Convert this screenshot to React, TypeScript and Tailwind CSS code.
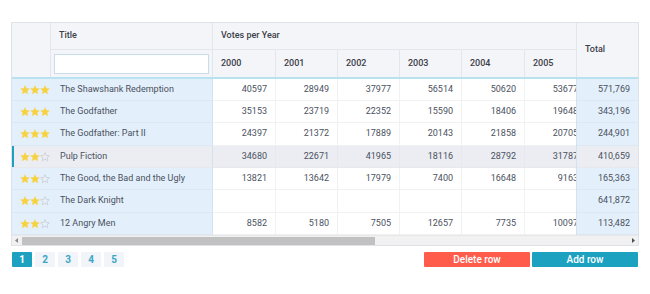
import React from "react";

type Row = { title: string; stars: number; v: (number | null)[]; total: string; hover?: boolean };

const rows: Row[] = [
  { title: "The Shawshank Redemption", stars: 3, v: [40597, 28949, 37977, 56514, 50620, 53677], total: "571,769" },
  { title: "The Godfather", stars: 3, v: [35153, 23719, 22352, 15590, 18406, 19648], total: "343,196" },
  { title: "The Godfather: Part II", stars: 3, v: [24397, 21372, 17889, 20143, 21858, 20705], total: "244,901" },
  { title: "Pulp Fiction", stars: 2, v: [34680, 22671, 41965, 18116, 28792, 31787], total: "410,659", hover: true },
  { title: "The Good, the Bad and the Ugly", stars: 2, v: [13821, 13642, 17979, 7400, 16648, 9163], total: "165,363" },
  { title: "The Dark Knight", stars: 2, v: [null, null, null, null, null, null], total: "641,872" },
  { title: "12 Angry Men", stars: 2, v: [8582, 5180, 7505, 12657, 7735, 10097], total: "113,482" },
];

const years = ["2000", "2001", "2002", "2003", "2004", "2005"];
const yw = ["w-[63px]", "w-[62px]", "w-[62px]", "w-[62px]", "w-[63px]", "w-[62px]"];
const rh = ["h-[22px]", "h-[22px]", "h-[23px]", "h-[22px]", "h-[22px]", "h-[23px]", "h-[22px]"];

function Star({ filled }: { filled: boolean }) {
  return (
    <svg width="10" height="10" viewBox="0 0 24 24" className="shrink-0">
      <path
        d="M12 1.5l3.1 6.6 7.2.8-5.4 4.9 1.6 7.1L12 17.3l-6.5 3.6 1.6-7.1-5.4-4.9 7.2-.8z"
        fill={filled ? "#f7d23e" : "none"}
        stroke={filled ? "#f7d23e" : "#c4c7cc"}
        strokeWidth={filled ? 1 : 1.6}
        strokeLinejoin="round"
      />
    </svg>
  );
}

export default function App() {
  return (
    <div className="w-[650px] h-[294px] bg-white text-[9px] text-[#4a5160]" style={{ fontFamily: "Roboto, 'Liberation Sans', sans-serif" }}>
      <div className="pt-[22px] pl-[11px]">
        <div className="w-[628px] border border-[#dfe2e6]">
          {/* Header */}
          <div className="flex bg-[#f4f5f9] border-b-2 border-[#b8e2f0] text-[#3c4048] font-medium">
            <div className="w-[39px] h-[54px] border-r border-[#e3e6ea] shrink-0" />
            <div className="w-[162px] shrink-0 border-r border-[#e3e6ea] flex flex-col">
              <div className="h-[27px] border-b border-[#e3e6ea] flex items-center pl-[8px]">Title</div>
              <div className="h-[27px] flex items-center px-[3px]">
                <div className="w-[157px] h-[20px] bg-white border border-[#c9dcec]" />
              </div>
            </div>
            <div className="w-[364px] shrink-0 overflow-hidden border-r border-[#e3e6ea] flex flex-col">
              <div className="h-[27px] border-b border-[#e3e6ea] flex items-center pl-[8px]">Votes per Year</div>
              <div className="h-[27px] flex w-[600px]">
                {years.map((y, i) => (
                  <div key={y} className={`${yw[i]} shrink-0 border-r border-[#e3e6ea] flex items-center pl-[8px]`}>{y}</div>
                ))}
                <div className="w-[62px] shrink-0 flex items-center pl-[8px]">2006</div>
              </div>
            </div>
            <div className="flex-1 h-[54px] flex items-center pl-[8px]">Total</div>
          </div>
          {/* Body */}
          {rows.map((r, ri) => (
            <div key={r.title} className={`flex ${rh[ri]} ${r.hover ? "bg-[#ebedf2]" : ""}`}>
              <div className={`w-[39px] shrink-0 flex items-center pl-[8px] border-b ${r.hover ? "shadow-[inset_2px_0_0_#1ca1c1] border-b-[#e6e8ec]" : "bg-[#e3effa] border-b-[#dbe7f3]"}`}>
                {[0, 1, 2].map((k) => (
                  <Star key={k} filled={k < r.stars} />
                ))}
              </div>
              <div className={`w-[162px] shrink-0 flex items-center pl-[9px] border-r border-r-[#d4e2f0] border-b ${r.hover ? "border-b-[#e6e8ec]" : "bg-[#e3effa] border-b-[#dbe7f3]"} whitespace-nowrap`}>
                {r.title}
              </div>
              <div className="w-[364px] shrink-0 overflow-hidden border-r border-[#d4e2f0]">
                <div className="flex w-[600px] h-full">
                  {r.v.map((n, i) => (
                    <div key={i} className={`${yw[i]} shrink-0 border-r border-b ${r.hover ? "border-[#e6e8ec]" : "border-[#f0f1f3] bg-white"} flex items-center justify-end pr-[8px]`}>
                      {n === null ? "" : n}
                    </div>
                  ))}
                </div>
              </div>
              <div className={`flex-1 flex items-center justify-end pr-[8px] border-b ${r.hover ? "border-[#e6e8ec]" : "bg-[#e3effa] border-[#dbe7f3]"}`}>
                {r.total}
              </div>
            </div>
          ))}
          {/* Scrollbar */}
          <div className="h-[10px] bg-[#f1f1f1] flex items-center border-t border-[#e8e8e8]">
            <div className="w-[10px] h-full flex items-center justify-center">
              <svg width="4" height="5" viewBox="0 0 4 5"><path d="M3 0v5L0 2.5z" fill="#8a8a8a" /></svg>
            </div>
            <div className="w-[353px] h-[8px] bg-[#c1c1c1]" />
            <div className="flex-1" />
            <div className="w-[10px] h-full flex items-center justify-center">
              <svg width="4" height="5" viewBox="0 0 4 5"><path d="M1 0v5L4 2.5z" fill="#505050" /></svg>
            </div>
          </div>
        </div>
        {/* Footer */}
        <div className="flex items-center mt-[6px] ml-[1px] w-[626px]">
          <div className="flex gap-[3px]">
            {["1", "2", "3", "4", "5"].map((p, i) => (
              <div
                key={p}
                className={`w-[20px] h-[15px] flex items-center justify-center text-[10px] font-bold rounded-[1px] ${i === 0 ? "bg-[#1ca1c1] text-white" : "bg-[#f1f4f8] text-[#3aa6c8]"}`}
              >
                {p}
              </div>
            ))}
          </div>
          <div className="flex-1" />
          <div className="flex gap-[2px]">
            <button className="w-[106px] h-[15px] bg-[#ff5c4c] text-white text-[10px] font-medium flex items-center justify-center rounded-[1px]">Delete row</button>
            <button className="w-[106px] h-[15px] bg-[#1ca1c1] text-white text-[10px] font-medium flex items-center justify-center rounded-[1px]">Add row</button>
          </div>
        </div>
      </div>
    </div>
  );
}
